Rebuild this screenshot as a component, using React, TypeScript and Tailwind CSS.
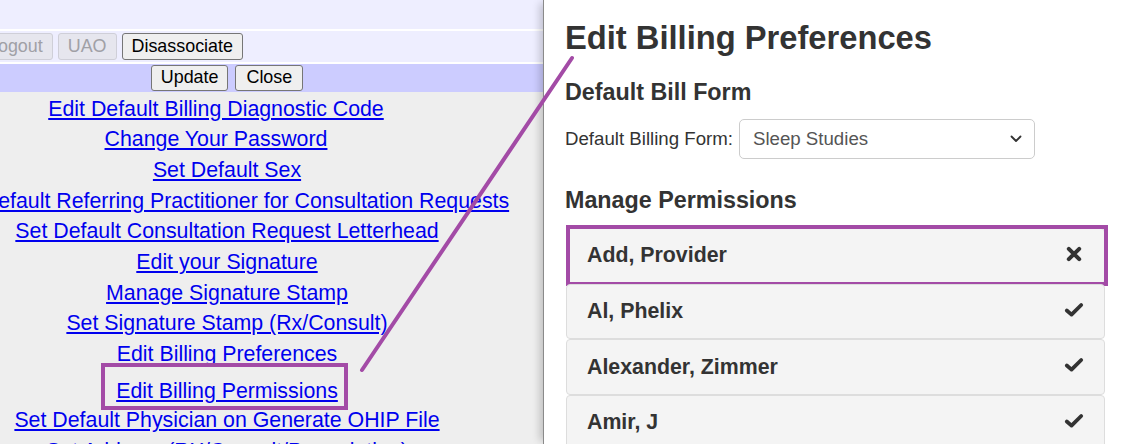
import React from "react";

const links: { t: string; u?: boolean; cls?: string }[] = [
  { t: "Edit Default Billing Diagnostic Code", u: true, cls: "pr-[22px]" },
  { t: "Change Your Password", u: true, cls: "pr-[22px]" },
  { t: "Set Default Sex", u: true },
  { t: "Set Default Referring Practitioner for Consultation Requests", u: true },
  { t: "Set Default Consultation Request Letterhead", u: true },
  { t: "Edit your Signature", u: true },
  { t: "Manage Signature Stamp", u: true },
  { t: "Set Signature Stamp (Rx/Consult)", u: true },
  { t: "Edit Billing Preferences", u: false },
  { t: "Edit Billing Permissions", u: true, cls: "pt-[6px]" },
  { t: "Set Default Physician on Generate OHIP File", u: true, cls: "mt-[-1.3px]" },
  { t: "Set Address (RX/Consult/Prescription)", u: true },
];

const people = ["Add, Provider", "Al, Phelix", "Alexander, Zimmer", "Amir, J"];

function XIcon() {
  return (
    <svg width="20" height="20" viewBox="0 0 20 20" className="mb-[3px] shrink-0">
      <path d="M4.8 4.8 L15.2 15.2 M15.2 4.8 L4.8 15.2" stroke="#333" strokeWidth="4" strokeLinecap="round" fill="none" />
    </svg>
  );
}

function CheckIcon() {
  return (
    <svg width="20" height="20" viewBox="0 0 20 20" className="mb-[3px] shrink-0">
      <path d="M2.8 10.5 L7.5 14.6 L17.2 5" stroke="#333" strokeWidth="3.8" strokeLinecap="round" strokeLinejoin="round" fill="none" />
    </svg>
  );
}

function Btn({ children, disabled }: { children: React.ReactNode; disabled?: boolean }) {
  return (
    <div
      className={
        disabled
          ? "h-[27px] px-[9px] flex items-center rounded-[3px] border border-[#cfcfd8] bg-[#e6e6ee] text-[#a0a0a6] text-[17.9px] leading-none shrink-0"
          : "h-[27px] px-[9px] flex items-center rounded-[3px] border border-[#767676] bg-[#efefef] text-black text-[17.9px] leading-none shrink-0"
      }
    >
      {children}
    </div>
  );
}

export default function App() {
  return (
    <div className="relative w-[1141px] h-[444px] overflow-hidden bg-white font-['Liberation_Sans',Arial,sans-serif]">
      <div className="flex h-full">
        {/* Left panel */}
        <div className="w-[543px] shrink-0 h-full overflow-hidden bg-[#eeeeee]">
          <div className="flex flex-col gap-[2px] bg-white">
            <div className="h-[29px] bg-[#eeeeff]" />
            <div className="h-[31px] bg-[#eeeeff] flex items-center">
              <div className="flex items-center gap-[5px] ml-[-22px] shrink-0">
                <Btn disabled>Logout</Btn>
                <Btn disabled>UAO</Btn>
                <Btn>Disassociate</Btn>
              </div>
            </div>
            <div className="h-[28px] bg-[#ccccff] flex items-center">
              <div className="w-[800px] shrink-0 ml-[-173px] flex justify-center gap-[7px]">
                <div className="h-[26px] px-[9px] flex items-center rounded-[3px] border border-[#767676] bg-[#efefef] text-black text-[17.9px] leading-none">Update</div>
                <div className="h-[26px] px-[10px] flex items-center rounded-[3px] border border-[#767676] bg-[#efefef] text-black text-[17.9px] leading-none">Close</div>
              </div>
            </div>
          </div>
          <div className="w-[800px] ml-[-173px] pt-[1.5px] text-center text-[21.33px] leading-[30.67px]">
            {links.map((l) => (
              <div key={l.t} className={l.cls ?? ""}>
                <a href="#" className={l.u ? "text-[#0000ee] underline" : "text-[#0000ee] no-underline"}>
                  {l.t}
                </a>
              </div>
            ))}
          </div>
        </div>

        {/* Right panel */}
        <div className="flex-1 h-full bg-white border-l border-[#8a8a8a] relative z-10 shadow-[-6px_0_8px_-3px_rgba(0,0,0,0.2)] pl-[21px] text-[#333333]">
          <h1 className="mt-[20px] text-[32.7px] leading-[36px] font-bold">Edit Billing Preferences</h1>
          <h2 className="mt-[23px] text-[23.3px] leading-[26px] font-bold">Default Bill Form</h2>
          <div className="mt-[14px] flex items-center h-[40px]">
            <span className="text-[18.67px] leading-[26.67px] mr-[6px]">Default Billing Form:</span>
            <div className="w-[296px] h-[40px] border border-[#cccccc] rounded-[5px] flex items-center justify-between pl-[13px] pr-[12px] text-[#555555] text-[18.67px]">
              <span>Sleep Studies</span>
              <svg width="12" height="8" viewBox="0 0 12 8">
                <path d="M1.5 1.5 L6 6 L10.5 1.5" stroke="#333" strokeWidth="1.8" fill="none" strokeLinecap="round" strokeLinejoin="round" />
              </svg>
            </div>
          </div>
          <h2 className="mt-[28px] text-[23.3px] leading-[26px] font-bold">Manage Permissions</h2>
          <div className="mt-[15px] ml-px w-[539px] flex flex-col">
            {people.map((p, i) => (
              <div
                key={p}
                className="relative h-[55.6px] shrink-0 bg-[#f4f4f4] border border-[#dddddd] rounded-[4px] flex items-center justify-between pl-[20px] pr-[20px] text-[21.33px] leading-[26.67px] font-bold"
              >
                <span>{p}</span>
                {i === 0 ? <XIcon /> : <CheckIcon />}
                {i === 0 && (
                  <div className="absolute -top-[4px] -left-[1px] -right-[4px] -bottom-[3px] border-[4px] border-[#a34ba6] pointer-events-none" />
                )}
              </div>
            ))}
          </div>
        </div>
      </div>

      {/* Annotation overlay */}
      <div className="absolute left-[101px] top-[363px] w-[247px] h-[47px] border-[4px] border-[#a34ba6] pointer-events-none z-20" />
      <svg className="absolute left-0 top-0 pointer-events-none z-20" width="1141" height="444">
        <line x1="572" y1="58" x2="362" y2="370" stroke="#a34ba6" strokeWidth="4" strokeLinecap="round" />
      </svg>
    </div>
  );
}
